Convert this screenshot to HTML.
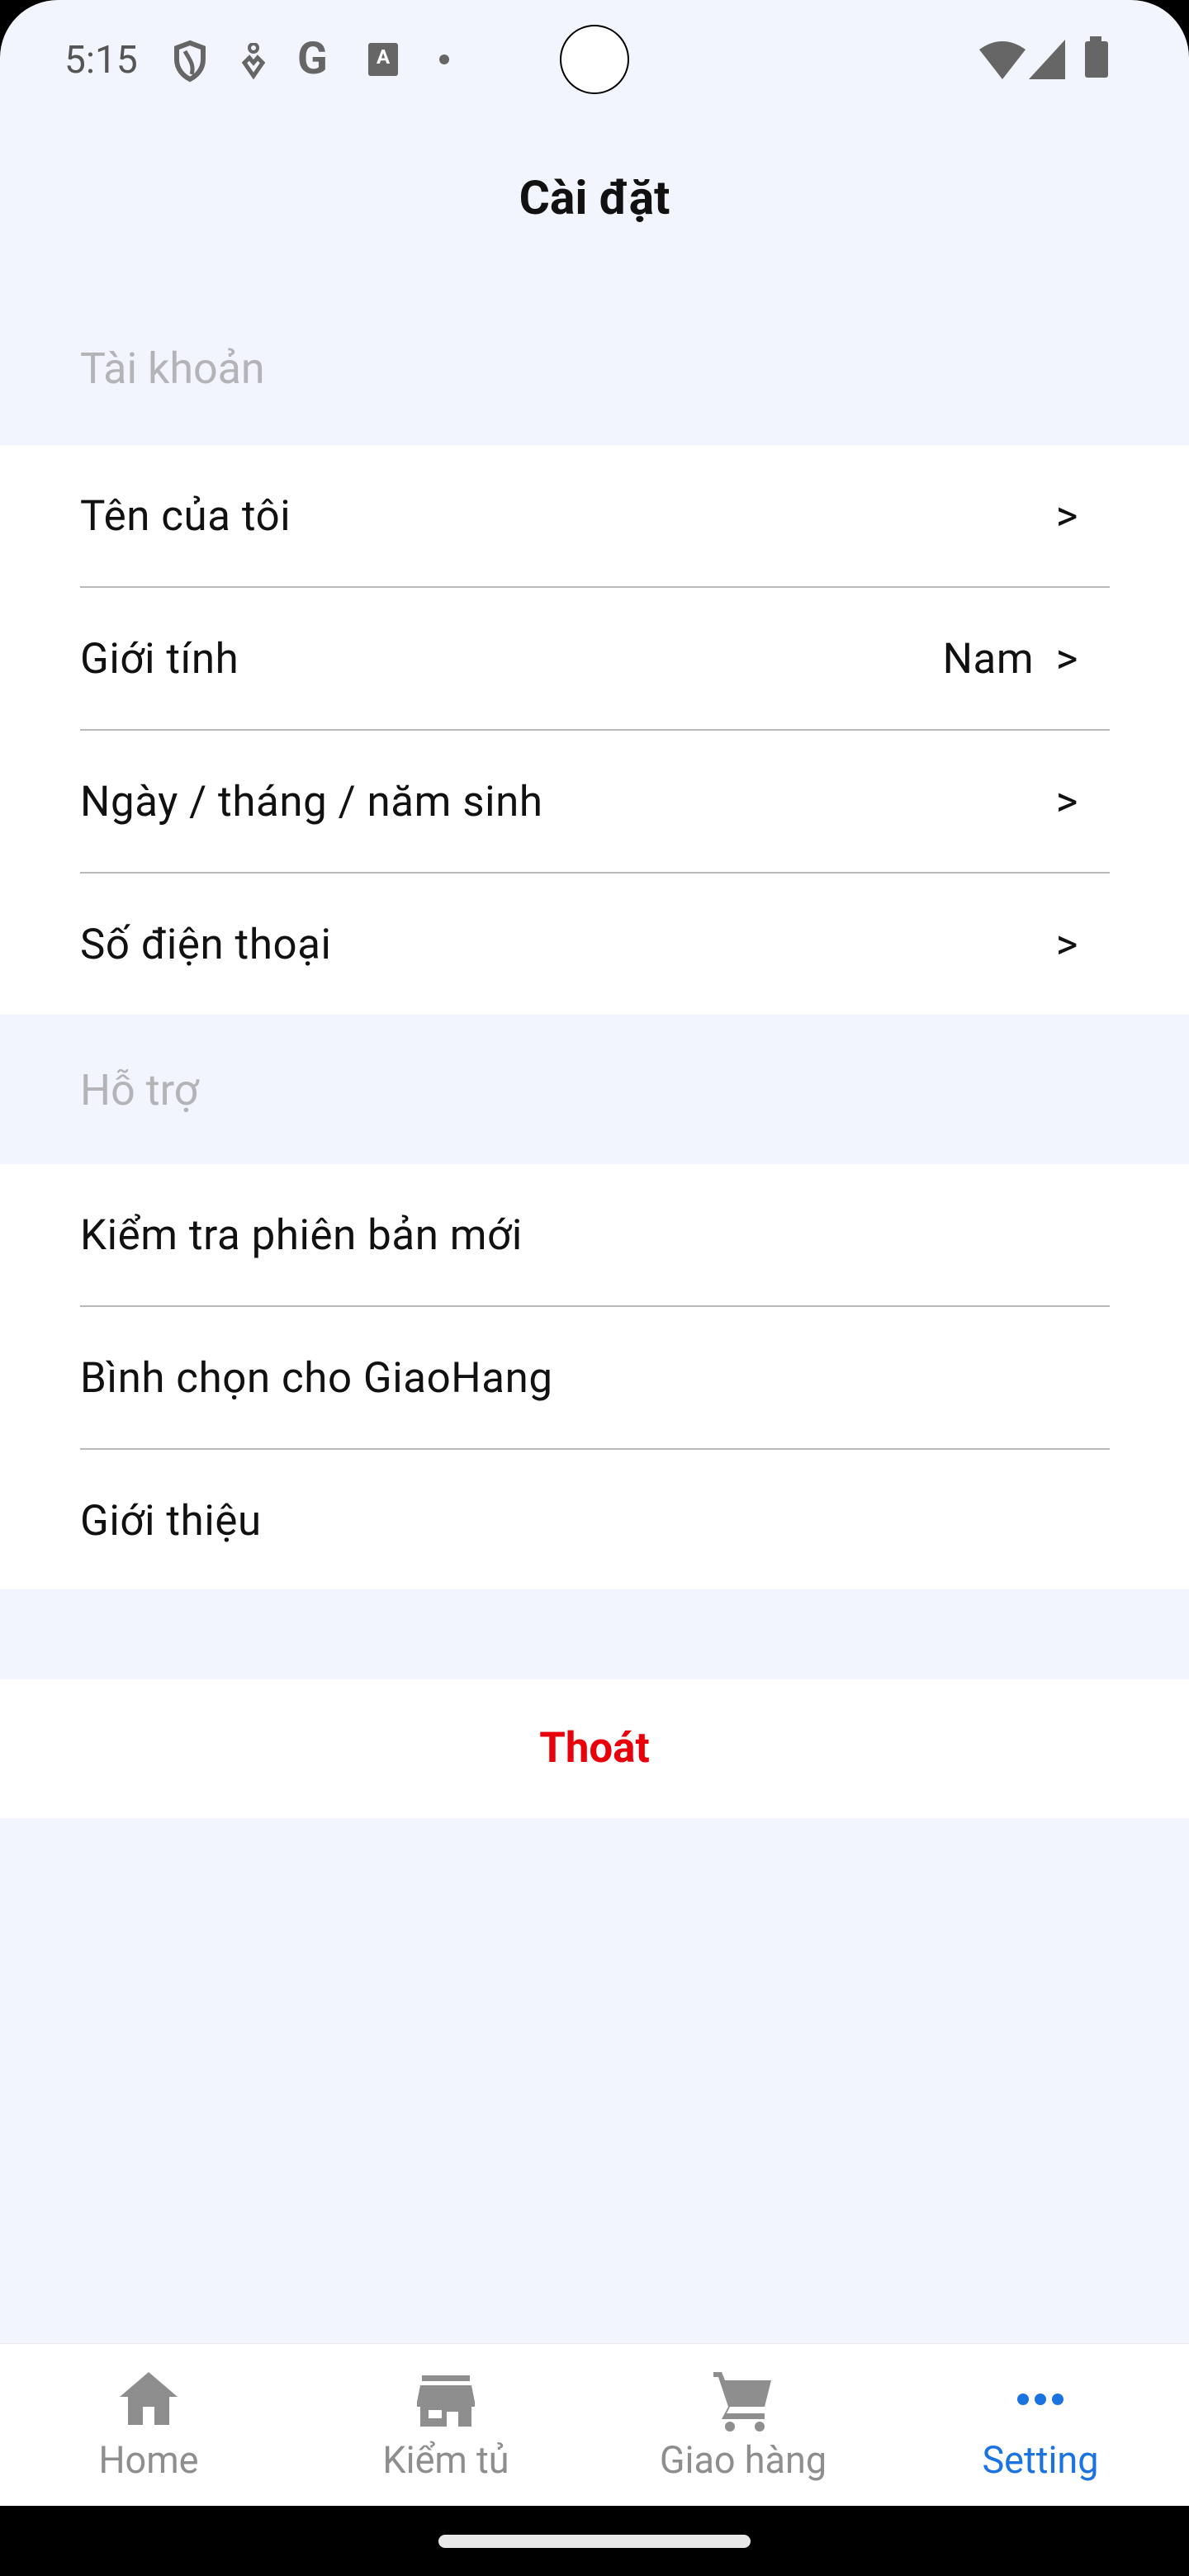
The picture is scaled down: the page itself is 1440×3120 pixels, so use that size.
<!DOCTYPE html>
<html><head><meta charset="utf-8"><style>
*{margin:0;padding:0;box-sizing:border-box}
body{width:1440px;height:3120px;background:#000;font-family:"Roboto","Liberation Sans",sans-serif;position:relative;overflow:hidden}
.screen{position:absolute;left:0;top:0;width:1440px;height:3035px;background:#f2f5fe;border-radius:70px 70px 0 0;overflow:hidden}
.abs{position:absolute}
.sec{position:absolute;left:0;width:1440px;background:#fff}
.row{position:absolute;left:97px;right:96px;height:173px;display:flex;align-items:center;font-size:51px;letter-spacing:0.6px;color:#111}
.row .r{margin-left:auto;margin-right:38px}
.sep{position:absolute;left:97px;width:1247px;height:2px;background:#b9b9b9}
.hdr{position:absolute;left:97px;font-size:52px;color:#b3b3b8}
.nav{position:absolute;left:0;top:2838px;width:1440px;height:197px;background:#fff;border-top:1px solid #e8e8ee}
.it{position:absolute;top:0;width:300px;text-align:center}
.it .lb{position:absolute;top:114px;width:300px;font-size:45px;color:#8e8e8e}
</style></head><body>
<div class="screen">
 <div class="abs" style="left:78px;top:46px;font-size:46px;color:#555">5:15</div>
 <svg class="abs" style="left:208px;top:48px" width="44" height="52" viewBox="0 0 22 26"><path d="M11 2L3 5v7c0 6 4 10 8 12 4-2 8-6 8-12V5z" fill="none" stroke="#666" stroke-width="3"/><path d="M8 7c2 4 6 8 4 14" fill="none" stroke="#666" stroke-width="2.5"/></svg>
 <svg class="abs" style="left:292px;top:52px" width="30" height="44" viewBox="0 0 15 22"><circle cx="7.5" cy="3" r="2.5" fill="none" stroke="#666" stroke-width="2"/><path d="M7.5 20L2 12l3-3 2.5 3 2.5-3 3 3z" fill="none" stroke="#666" stroke-width="2.5"/></svg>
 <div class="abs" style="left:360px;top:40px;font-size:54px;font-weight:bold;color:#666">G</div>
 <div class="abs" style="left:446px;top:52px;width:36px;height:40px;background:#666;border-radius:3px;color:#fff;font-size:24px;font-weight:bold;text-align:center;line-height:34px">A</div>
 <div class="abs" style="left:532px;top:66px;width:12px;height:12px;border-radius:50%;background:#666"></div>
 <div class="abs" style="left:678px;top:30px;width:84px;height:84px;border-radius:50%;background:#fff;border:2px solid #000"></div>
 <svg class="abs" style="left:1186px;top:48px" width="56" height="48" viewBox="0 0 28 24"><path d="M0 6Q14-4 28 6L14 24z" fill="#666"/></svg>
 <svg class="abs" style="left:1246px;top:48px" width="44" height="48" viewBox="0 0 22 24"><path d="M22 0V24H0z" fill="#666"/></svg>
 <div class="abs" style="left:1314px;top:50px;width:28px;height:44px;background:#666;border-radius:3px"></div>
 <div class="abs" style="left:1320px;top:44px;width:14px;height:8px;background:#666"></div>

 <div class="abs" style="left:0;width:1440px;top:206px;text-align:center;font-size:57px;font-weight:bold;color:#111">Cài đặt</div>
 <div class="hdr" style="top:416px">Tài khoản</div>
 <div class="sec" style="top:539px;height:690px">
  <div class="row" style="top:0">Tên của tôi<span class="r">&gt;</span></div>
  <div class="sep" style="top:171px"></div>
  <div class="row" style="top:173px">Giới tính<span class="r">Nam &nbsp;&gt;</span></div>
  <div class="sep" style="top:344px"></div>
  <div class="row" style="top:346px">Ngày / tháng / năm sinh<span class="r">&gt;</span></div>
  <div class="sep" style="top:517px"></div>
  <div class="row" style="top:519px">Số điện thoại<span class="r">&gt;</span></div>
 </div>
 <div class="hdr" style="top:1290px">Hỗ trợ</div>
 <div class="sec" style="top:1410px;height:515px">
  <div class="row" style="top:0">Kiểm tra phiên bản mới</div>
  <div class="sep" style="top:171px"></div>
  <div class="row" style="top:173px">Bình chọn cho GiaoHang</div>
  <div class="sep" style="top:344px"></div>
  <div class="row" style="top:346px">Giới thiệu</div>
 </div>
 <div class="sec" style="top:2034px;height:168px;text-align:center;line-height:168px;font-size:51px;font-weight:bold;color:#e8000b">Thoát</div>

 <div class="nav">
  <div class="it" style="left:30px">
   <svg class="abs" style="left:115px;top:34px" width="70" height="64" viewBox="0 0 70 64"><path d="M35 0L0 30h10v34h18V42h14v22h18V30h10z" fill="#8e8e8e"/></svg>
   <div class="lb">Home</div></div>
  <div class="it" style="left:390px">
   <svg class="abs" style="left:115px;top:38px" width="70" height="62" viewBox="0 0 70 62"><rect x="6" y="0" width="58" height="7" fill="#8e8e8e"/><path d="M4 12h62l4 20v6h-4v24H50V44H36v18H4V38H0v-6z" fill="#8e8e8e"/><rect x="14" y="42" width="16" height="10" fill="#fff"/></svg>
   <div class="lb">Kiểm tủ</div></div>
  <div class="it" style="left:750px">
   <svg class="abs" style="left:112px;top:30px" width="76" height="76" viewBox="0 0 76 76"><path d="M2 4h10l4 10h56l-8 32H22l-4 8h46v7H12l8-15L8 10H2z" fill="#8e8e8e"/><circle cx="22" cy="70" r="6" fill="#8e8e8e"/><circle cx="58" cy="70" r="6" fill="#8e8e8e"/></svg>
   <div class="lb">Giao hàng</div></div>
  <div class="it" style="left:1110px">
   <svg class="abs" style="left:120px;top:58px" width="60" height="18" viewBox="0 0 60 18"><circle cx="9" cy="9" r="7" fill="#1a73e0"/><circle cx="30" cy="9" r="7" fill="#1a73e0"/><circle cx="51" cy="9" r="7" fill="#1a73e0"/></svg>
   <div class="lb" style="color:#1a73e0">Setting</div></div>
 </div>
</div>
<div class="abs" style="left:531px;top:3070px;width:378px;height:16px;border-radius:8px;background:#e8e8e8"></div>
</body></html>
